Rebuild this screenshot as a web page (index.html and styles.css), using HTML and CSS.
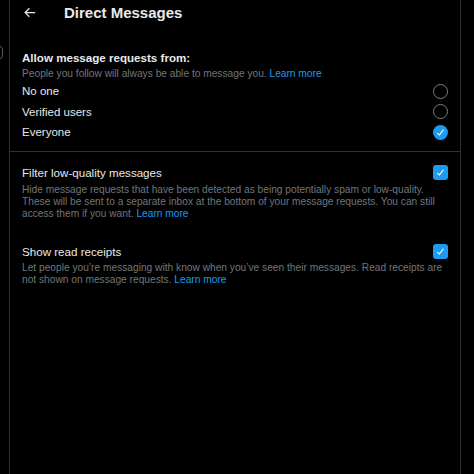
FILE: index.html
```html
<!DOCTYPE html>
<html lang="en">
<head>
<meta charset="utf-8">
<title>Direct Messages</title>
<link rel="stylesheet" href="styles.css">
</head>
<body>
<div class="edge-icon"></div>
<main class="panel">
  <header class="header">
    <svg class="back" viewBox="0 0 24 24" aria-hidden="true"><path d="M7.414 13l5.043 5.04-1.414 1.42L3.586 12l7.457-7.46 1.414 1.42L7.414 11H21v2H7.414z"/></svg>
    <h1 class="title">Direct Messages</h1>
  </header>

  <section class="requests">
    <h2 class="heading">Allow message requests from:</h2>
    <p class="subtitle">People you follow will always be able to message you. <a class="link">Learn more</a></p>
    <div class="option"><span>No one</span><span class="radio"></span></div>
    <div class="option"><span>Verified users</span><span class="radio"></span></div>
    <div class="option"><span>Everyone</span><span class="radio checked"><svg viewBox="0 0 24 24"><path d="M9.64 18.952l-5.55-4.861 1.317-1.504 3.951 3.459 8.459-10.948L19.4 6.32 9.64 18.952z"/></svg></span></div>
  </section>

  <section class="settings">
    <div class="setting">
      <div class="setting-row"><span>Filter low-quality messages</span><span class="checkbox"><svg viewBox="0 0 24 24"><path d="M9.64 18.952l-5.55-4.861 1.317-1.504 3.951 3.459 8.459-10.948L19.4 6.32 9.64 18.952z"/></svg></span></div>
      <p class="desc">Hide message requests that have been detected as being potentially spam or low-quality. These will be sent to a separate inbox at the bottom of your message requests. You can still access them if you want. <a class="link">Learn more</a></p>
    </div>
    <div class="setting">
      <div class="setting-row"><span>Show read receipts</span><span class="checkbox"><svg viewBox="0 0 24 24"><path d="M9.64 18.952l-5.55-4.861 1.317-1.504 3.951 3.459 8.459-10.948L19.4 6.32 9.64 18.952z"/></svg></span></div>
      <p class="desc">Let people you’re messaging with know when you’ve seen their messages. Read receipts are not shown on message requests. <a class="link">Learn more</a></p>
    </div>
  </section>
</main>
</body>
</html>
```

FILE: styles.css
```css
html, body {
  margin: 0;
  padding: 0;
  background: #000;
  height: 100%;
  overflow: hidden;
}
body {
  font-family: "Liberation Sans", Arial, sans-serif;
  color: #e7e9ea;
  position: relative;
}
.edge-icon {
  position: absolute;
  left: -10px;
  top: 45px;
  width: 11px;
  height: 13px;
  border: 1.5px solid #5b5f63;
  border-radius: 5px;
}
.panel {
  margin-left: 9px;
  width: 450px;
  height: 474px;
  border-left: 1px solid #2f3336;
  border-right: 1px solid #2f3336;
  box-sizing: content-box;
}
.header {
  height: 25px;
  display: flex;
  align-items: center;
}
.back {
  width: 15px;
  height: 15px;
  fill: #e7e9ea;
  margin-left: 12px;
}
.title {
  margin: 0 0 0 27px;
  font-size: 15px;
  font-weight: 700;
  line-height: 20px;
  color: #e7e9ea;
}
.requests {
  padding: 0 12px;
  margin-top: 25px;
}
.heading {
  margin: 0;
  font-size: 11.6px;
  font-weight: 700;
  line-height: 16px;
}
.subtitle {
  margin: 1px 0 0;
  font-size: 10.2px;
  line-height: 14px;
  color: #71767b;
}
.link {
  color: #1d9bf0;
}
.option {
  height: 20.5px;
  display: flex;
  align-items: center;
  justify-content: space-between;
  font-size: 11.5px;
}
.radio {
  width: 15px;
  height: 15px;
  box-sizing: border-box;
  border: 1.5px solid #7b8085;
  border-radius: 50%;
  display: flex;
  align-items: center;
  justify-content: center;
}
.radio.checked {
  border: none;
  background: #1d9bf0;
}
.radio svg, .checkbox svg {
  width: 11px;
  height: 11px;
  fill: #fff;
}
.settings {
  margin-top: 8.5px;
  border-top: 1px solid #2f3336;
  padding: 13px 12px 0;
}
.setting + .setting {
  margin-top: 24px;
}
.setting-row {
  height: 15px;
  display: flex;
  align-items: center;
  justify-content: space-between;
  font-size: 11.6px;
}
.checkbox {
  width: 15px;
  height: 15px;
  border-radius: 3px;
  background: #1d9bf0;
  display: flex;
  align-items: center;
  justify-content: center;
}
.desc {
  margin: 3.5px 0 0;
  font-size: 10.2px;
  line-height: 12px;
  color: #71767b;
  padding-right: 3px;
}
.desc .link {
  display: inline-block;
  line-height: 12px;
  vertical-align: top;
}
```
